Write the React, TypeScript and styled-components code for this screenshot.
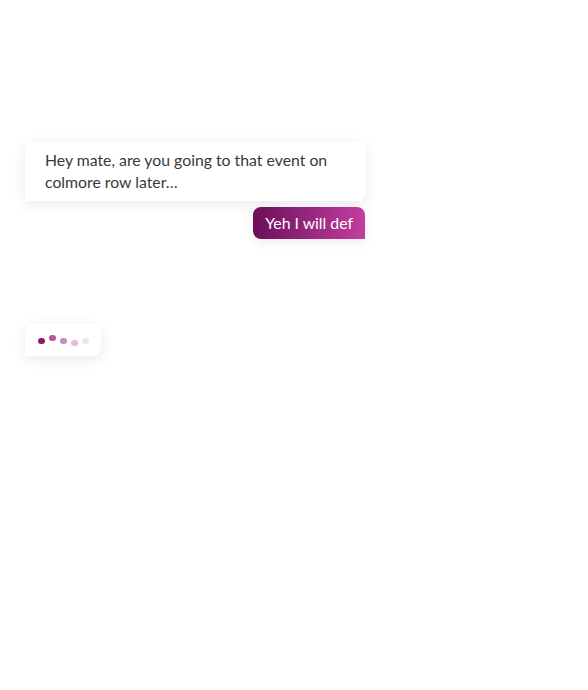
import React from "react";
import styled, { createGlobalStyle } from "styled-components";

const Global = createGlobalStyle`
  html, body { margin: 0; padding: 0; background: #ffffff; }
  body { font-family: Lato, "Noto Sans", sans-serif; }
`;

const Page = styled.div`
  width: 588px;
  height: 690px;
  box-sizing: border-box;
  padding: 142px 0 0 25px;
`;

const Thread = styled.div`
  width: 341px;
  display: flex;
  flex-direction: column;
  gap: 6px;
`;

const Received = styled.div`
  align-self: stretch;
  background: #ffffff;
  color: #3a3a3a;
  font-size: 15.8px;
  line-height: 22px;
  padding: 7px 20px 8px;
  border-radius: 8px 8px 8px 0;
  box-shadow: 0 3px 14px rgba(0, 0, 0, 0.09);
`;

const Sent = styled.div`
  align-self: flex-end;
  margin-right: 1px;
  background: linear-gradient(90deg, #6c0f58 0%, #9a2a80 55%, #c23e9e 100%);
  color: #ffffff;
  font-size: 15.8px;
  line-height: 22px;
  padding: 5px 12px;
  border-radius: 8px 8px 0 8px;
  box-shadow: 0 3px 12px rgba(0, 0, 0, 0.08);
`;

const Typing = styled.div`
  margin-top: 79px;
  align-self: flex-start;
  width: 76px;
  height: 32px;
  box-sizing: border-box;
  background: #ffffff;
  border-radius: 8px 8px 8px 0;
  box-shadow: 0 3px 14px rgba(0, 0, 0, 0.09);
  display: flex;
  align-items: center;
  padding-left: 13px;
  gap: 4.5px;
`;

const Dot = styled.span<{ $c: string; $y: number }>`
  width: 6.5px;
  height: 6.5px;
  border-radius: 50%;
  background: ${(p) => p.$c};
  transform: translateY(${(p) => p.$y}px);
`;

const dots = [
  { c: "#8c1a6e", y: 1 },
  { c: "#b4569f", y: -2 },
  { c: "#c98dc0", y: 1 },
  { c: "#e2bcda", y: 3 },
  { c: "#f2e0ee", y: 1 },
];

export default function App() {
  return (
    <Page>
      <Global />
      <Thread>
        <Received>Hey mate, are you going to that event on colmore row later…</Received>
        <Sent>Yeh I will def</Sent>
        <Typing>
          {dots.map((d, i) => (
            <Dot key={i} $c={d.c} $y={d.y} />
          ))}
        </Typing>
      </Thread>
    </Page>
  );
}
